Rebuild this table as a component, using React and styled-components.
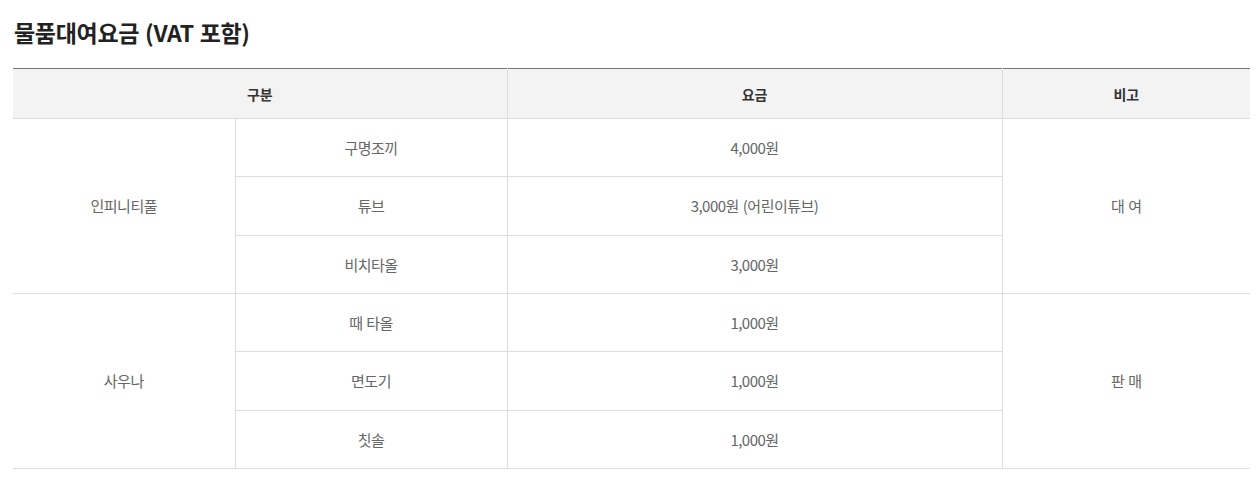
import React from "react";
import styled, { createGlobalStyle } from "styled-components";

const Global = createGlobalStyle`
  html, body { margin: 0; padding: 0; background: #fff; }
  body { font-family: "Noto Sans CJK KR", "Noto Sans", sans-serif; }
`;

const Wrap = styled.div`
  padding: 15px 8px 0 13px;
`;

const Title = styled.h3`
  margin: 0 0 19px 1px;
  font-size: 23px;
  line-height: 34px;
  font-weight: 700;
  color: #222;
  letter-spacing: -0.3px;
  word-spacing: 1px;
`;

const Table = styled.table`
  width: 1237px;
  border-collapse: collapse;
  table-layout: fixed;
  border-top: 1px solid #777;
`;

const Th = styled.th`
  height: 49px;
  padding: 0;
  background: #f3f3f3;
  border-bottom: 1px solid #ddd;
  border-left: ${(p) => (p.$first ? "none" : "1px solid #ddd")};
  font-size: 14px;
  font-weight: 600;
  color: #333;
  text-align: center;
  letter-spacing: 0;
`;

const Td = styled.td`
  height: 57.33px;
  padding: 0;
  border-bottom: 1px solid #ddd;
  border-left: ${(p) => (p.$first ? "none" : "1px solid #ddd")};
  font-size: 15px;
  font-weight: 400;
  color: #666;
  text-align: center;
  letter-spacing: -0.5px;
  word-spacing: 1px;
`;

const groups = [
  {
    name: "인피니티풀",
    note: "대 여",
    items: [
      ["구명조끼", "4,000원"],
      ["튜브", "3,000원 (어린이튜브)"],
      ["비치타올", "3,000원"],
    ],
  },
  {
    name: "사우나",
    note: "판 매",
    items: [
      ["때 타올", "1,000원"],
      ["면도기", "1,000원"],
      ["칫솔", "1,000원"],
    ],
  },
];

export default function App() {
  return (
    <>
      <Global />
      <Wrap>
        <Title>물품대여요금 (VAT 포함)</Title>
        <Table>
          <colgroup>
            <col style={{ width: 222 }} />
            <col style={{ width: 272 }} />
            <col style={{ width: 495 }} />
            <col style={{ width: 248 }} />
          </colgroup>
          <thead>
            <tr>
              <Th $first colSpan={2}>구분</Th>
              <Th>요금</Th>
              <Th>비고</Th>
            </tr>
          </thead>
          <tbody>
            {groups.map((g) =>
              g.items.map(([item, price], i) => (
                <tr key={g.name + item}>
                  {i === 0 && (
                    <Td $first rowSpan={g.items.length}>
                      {g.name}
                    </Td>
                  )}
                  <Td>{item}</Td>
                  <Td>{price}</Td>
                  {i === 0 && <Td rowSpan={g.items.length}>{g.note}</Td>}
                </tr>
              ))
            )}
          </tbody>
        </Table>
      </Wrap>
    </>
  );
}
